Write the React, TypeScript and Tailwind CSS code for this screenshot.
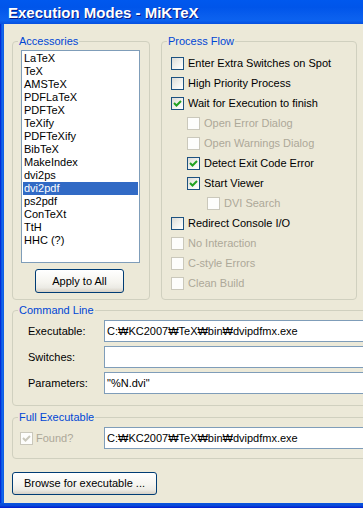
import React from "react";

const F = "font-['Liberation_Sans',Arial,sans-serif]";

function Cb({ checked = false, disabled = false }: { checked?: boolean; disabled?: boolean }) {
  return (
    <span
      className={
        "flex w-[13px] h-[13px] shrink-0 items-center justify-center border " +
        (disabled
          ? "border-[#cac8bb] bg-[#fdfdfb]"
          : "border-[#1c5180] bg-[linear-gradient(135deg,#dcdcd7_0%,#f4f4f1_60%,#ffffff_100%)]")
      }
    >
      {checked && (
        <svg width="11" height="11" viewBox="0 0 11 11">
          <polyline
            points="2,5 4.5,7.5 9,3"
            fill="none"
            stroke={disabled ? "#cac8bb" : "#21a121"}
            strokeWidth="2"
          />
        </svg>
      )}
    </span>
  );
}

function Row({
  label,
  checked,
  disabled,
  indent,
}: {
  label: string;
  checked?: boolean;
  disabled?: boolean;
  indent: "pl-0" | "pl-[16px]" | "pl-[36px]";
}) {
  return (
    <div className={"flex h-[20px] items-center " + indent}>
      <Cb checked={checked} disabled={disabled} />
      <span className={"ml-[4px] whitespace-nowrap " + (disabled ? "text-[#aca899]" : "text-black")}>{label}</span>
    </div>
  );
}

function Group({
  title,
  className,
  children,
}: {
  title: string;
  className: string;
  children: React.ReactNode;
}) {
  return (
    <fieldset className={"rounded-[4px] border border-[#d0d0bf] m-0 p-0 " + className}>
      <legend className="ml-[5px] px-[1px] text-[#0046d5] leading-[13px]">{title}</legend>
      {children}
    </fieldset>
  );
}

function XpButton({ label, className }: { label: string; className: string }) {
  return (
    <div
      className={
        "flex items-center justify-center rounded-[3px] border border-[#003c74] bg-[linear-gradient(180deg,#ffffff_0%,#f5f4ef_55%,#ecebe5_80%,#d6d0c5_100%)] text-black " +
        className
      }
    >
      {label}
    </div>
  );
}

function TextBox({ value }: { value: string }) {
  return (
    <div className="flex h-[22px] w-[320px] items-center border border-[#7f9db9] bg-white pl-[2px] whitespace-nowrap text-black">
      {value}
    </div>
  );
}

const items = [
  "LaTeX",
  "TeX",
  "AMSTeX",
  "PDFLaTeX",
  "PDFTeX",
  "TeXify",
  "PDFTeXify",
  "BibTeX",
  "MakeIndex",
  "dvi2ps",
  "dvi2pdf",
  "ps2pdf",
  "ConTeXt",
  "TtH",
  "HHC (?)",
];

export default function App() {
  const path = "C:\u20A9KC2007\u20A9TeX\u20A9bin\u20A9dvipdfmx.exe";
  return (
    <div className={"w-[363px] h-[508px] overflow-hidden flex flex-col bg-[#ece9d8] text-[11px] leading-[13px] " + F}>
      {/* Title bar */}
      <div className="h-[24px] shrink-0 flex items-center pl-[8px] pt-[1px] bg-[linear-gradient(180deg,#0058ee_0%,#0055ea_30%,#0a5fee_70%,#0b62f0_85%,#0650e0_100%)]">
        <span className="text-white font-bold text-[15px] leading-[17px] whitespace-nowrap [text-shadow:1px_1px_0_#0a1883]">
          Execution Modes - MiKTeX
        </span>
      </div>
      {/* Body with left frame */}
      <div className="flex flex-1 min-h-0">
        <div className="w-[4px] shrink-0 bg-[linear-gradient(90deg,#0019cf_0%,#0a5ae6_40%,#166aee_70%,#0855dd_100%)]" />
        <div className="flex-1 min-w-0 overflow-hidden pl-[8px] pt-[11px]">
          <div className="w-[420px]">
            <div className="flex gap-[11px]">
              <Group title="Accessories" className="w-[138px] h-[265px]">
                <div className="pl-[8px] pt-[2px] flex flex-col">
                  <div className="w-[119px] h-[213px] border border-[#7f9db9] bg-white p-[1px]">
                    {items.map((it) => (
                      <div
                        key={it}
                        className={
                          "h-[13px] pl-[1px] whitespace-nowrap " +
                          (it === "dvi2pdf" ? "bg-[#316ac5] text-white" : "text-black")
                        }
                      >
                        {it}
                      </div>
                    ))}
                  </div>
                  <div className="pl-[14px] pt-[6px]">
                    <XpButton label="Apply to All" className="w-[89px] h-[24px]" />
                  </div>
                </div>
              </Group>
              <Group title="Process Flow" className="w-[196px] h-[265px]">
                <div className="pl-[9px] pt-[5px] flex flex-col">
                  <Row indent="pl-0" label="Enter Extra Switches on Spot" />
                  <Row indent="pl-0" label="High Priority Process" />
                  <Row indent="pl-0" label="Wait for Execution to finish" checked />
                  <Row indent="pl-[16px]" label="Open Error Dialog" disabled />
                  <Row indent="pl-[16px]" label="Open Warnings Dialog" disabled />
                  <Row indent="pl-[16px]" label="Detect Exit Code Error" checked />
                  <Row indent="pl-[16px]" label="Start Viewer" checked />
                  <Row indent="pl-[36px]" label="DVI Search" disabled />
                  <Row indent="pl-0" label="Redirect Console I/O" />
                  <Row indent="pl-0" label="No Interaction" disabled />
                  <Row indent="pl-0" label="C-style Errors" disabled />
                  <Row indent="pl-0" label="Clean Build" disabled />
                </div>
              </Group>
            </div>

            <Group title="Command Line" className="mt-[4px] w-[400px] h-[102px]">
              <div className="flex flex-col gap-[4px] pt-[3px]">
                <div className="flex items-center">
                  <span className="w-[91px] pl-[15px] text-black">Executable:</span>
                  <TextBox value={path} />
                </div>
                <div className="flex items-center">
                  <span className="w-[91px] pl-[15px] text-black">Switches:</span>
                  <TextBox value="" />
                </div>
                <div className="flex items-center">
                  <span className="w-[91px] pl-[15px] text-black">Parameters:</span>
                  <TextBox value={'"%N.dvi"'} />
                </div>
              </div>
            </Group>

            <Group title="Full Executable" className="mt-[5px] w-[400px] h-[48px]">
              <div className="flex items-center pt-[3px]">
                <div className="w-[91px] pl-[7px] flex items-center">
                  <Cb checked disabled />
                  <span className="ml-[3px] text-[#aca899]">Found?</span>
                </div>
                <TextBox value={path} />
              </div>
            </Group>

            <div className="pt-[13px]">
              <XpButton label="Browse for executable ..." className="w-[145px] h-[23px]" />
            </div>
          </div>
        </div>
      </div>
      <div className="h-[5px] shrink-0 bg-[linear-gradient(180deg,#0855dd_0%,#0a4ad8_50%,#0019cf_100%)]" />
    </div>
  );
}
